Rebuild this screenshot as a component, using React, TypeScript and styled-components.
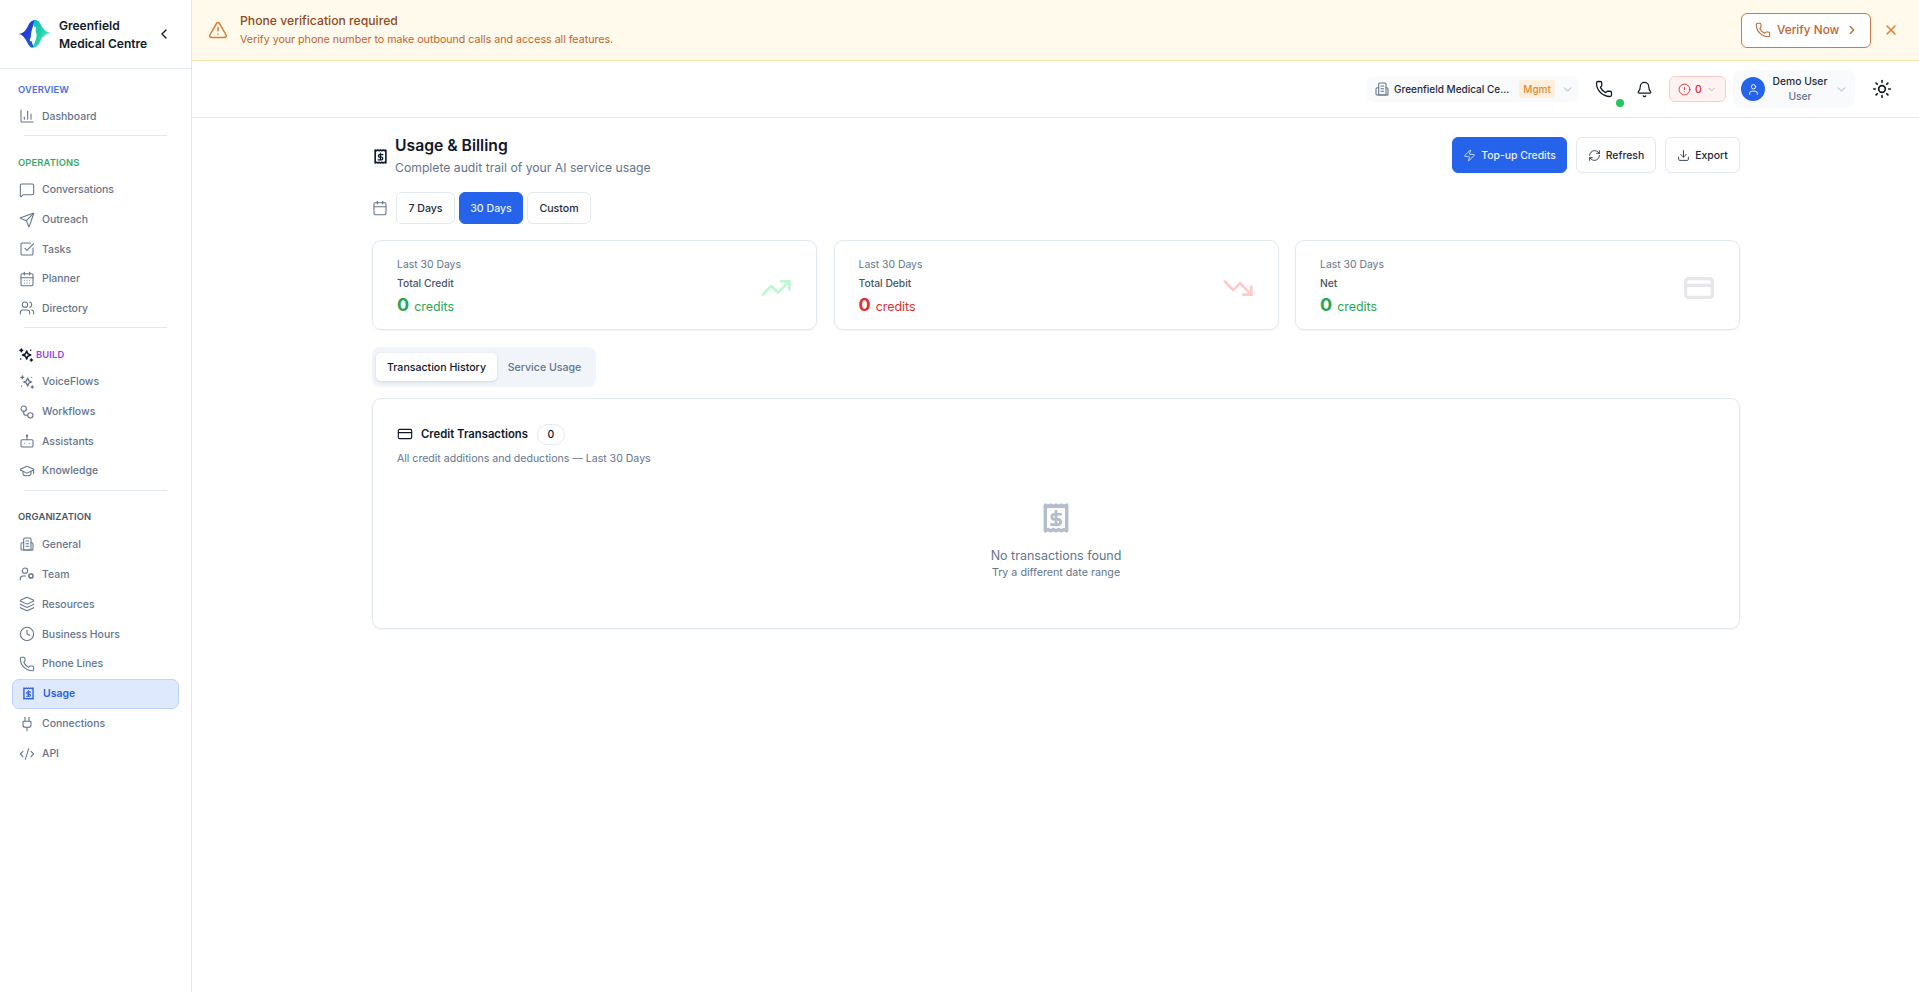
import React from 'react';
import styled, { createGlobalStyle } from 'styled-components';
import {
  Bell,
  CalendarDays,
  Calendar,
  ChartColumn,
  ChevronDown,
  ChevronLeft,
  ChevronRight,
  CircleAlert,
  Clock,
  CodeXml,
  CreditCard,
  Download,
  GraduationCap,
  Layers,
  MessageSquare,
  Phone,
  Plug,
  RefreshCw,
  Send,
  SquareCheckBig,
  Sun,
  TrendingDown,
  TrendingUp,
  TriangleAlert,
  User,
  UserCog,
  Users,
  X,
  Zap,
} from 'lucide-react';

const GlobalStyle = createGlobalStyle`
  html, body {
    margin: 0;
    padding: 0;
    background: #fff;
  }
  body {
    font-family: Inter, "Noto Sans", "Liberation Sans", sans-serif;
    color: #0f172a;
  }
  * {
    box-sizing: border-box;
  }
`;

const Shell = styled.div`
  display: flex;
  min-height: 992px;
`;

const Sidebar = styled.aside`
  width: 192px;
  flex: none;
  border-right: 1px solid #e2e8f0;
`;

const Brand = styled.div`
  height: 69px;
  border-bottom: 1px solid #e2e8f0;
  display: flex;
  align-items: center;
  padding: 0 0 0 19px;
`;

const BrandName = styled.div`
  margin-left: 8px;
  padding-top: 2px;
  width: 94px;
  font-size: 12px;
  line-height: 18px;
  font-weight: 600;
  color: #111827;
`;

const Collapse = styled.span`
  display: flex;
  margin-left: 3px;
  color: #111827;
`;

const Section = styled.section`
  padding-top: 11px;
  &:nth-of-type(1) {
    padding-top: 12px;
  }
`;

const SectionLabel = styled.div<{ $tone: string }>`
  display: flex;
  align-items: center;
  gap: 2px;
  height: 16px;
  padding-left: 18px;
  margin-bottom: 4.6px;
  font-size: 9.4px;
  font-weight: 600;
  letter-spacing: 0.12px;
  color: ${p => p.$tone};
`;

const Divider = styled.div`
  height: 1px;
  background: #e2e8f0;
  margin: 4px 24px 7.4px 24px;
`;

const NavItem = styled.a<{ $active?: boolean; $height: number }>`
  display: flex;
  align-items: center;
  gap: ${p => (p.$active ? '9px' : '7px')};
  height: ${p => p.$height}px;
  margin: 0 12px;
  padding-left: ${p => (p.$active ? '10px' : '6px')};
  border: 1px solid ${p => (p.$active ? '#bfd3fb' : 'transparent')};
  border-radius: 7px;
  background: ${p => (p.$active ? '#dfe9fd' : 'transparent')};
  font-size: 10.45px;
  font-weight: ${p => (p.$active ? 600 : 500)};
  color: ${p => (p.$active ? '#2f5fe0' : '#64748b')};
  svg {
    flex: none;
  }
`;

const Main = styled.div`
  flex: 1;
  min-width: 0;
`;

const Banner = styled.div`
  height: 61px;
  background: #fffaeb;
  border-bottom: 1px solid #fde3ae;
  display: flex;
  align-items: center;
  padding: 0 20px 0 16px;
`;

const BannerIcon = styled.span`
  display: flex;
  color: #d97c30;
  margin-right: 12px;
`;

const BannerText = styled.div`
  flex: 1;
`;

const BannerTitle = styled.div`
  font-size: 12.2px;
  font-weight: 500;
  line-height: 18px;
  color: #8f4a22;
`;

const BannerBody = styled.div`
  font-size: 10.65px;
  line-height: 19px;
  color: #c0622b;
`;

const VerifyButton = styled.button`
  display: flex;
  align-items: center;
  height: 35px;
  width: 130px;
  padding: 0 0 0 13px;
  gap: 6px;
  background: #fff;
  border: 1px solid #cf7a45;
  border-radius: 6px;
  font: 500 11.8px Inter, sans-serif;
  color: #bf632f;
`;

const BannerClose = styled.span`
  display: flex;
  margin-left: 12px;
  color: #dd7a2c;
`;

const Topbar = styled.header`
  height: 57px;
  border-bottom: 1px solid #e2e8f0;
  display: flex;
  align-items: center;
  justify-content: flex-end;
  padding-right: 10px;
`;

const OrgPill = styled.div`
  display: flex;
  align-items: center;
  width: 213px;
  height: 26px;
  padding: 0 8px;
  gap: 6px;
  background: #f8fafc;
  border-radius: 8px;
  color: #64748b;
  margin-right: 16px;
  svg {
    flex: none;
  }
`;

const OrgName = styled.span`
  width: 119px;
  margin-left: -2px;
  margin-right: 4px;
  white-space: nowrap;
  font-size: 10px;
  font-weight: 500;
  color: #1e293b;
`;

const OrgBadge = styled.span`
  padding: 2px 4px;
  border-radius: 3px;
  background: #fdefdc;
  color: #e08a34;
  font-size: 10px;
  font-weight: 500;
  line-height: 14px;
`;

const OrgChevron = styled.span`
  display: flex;
  margin-left: auto;
  color: #94a3b8;
`;

const IconSlot = styled.span<{ $gap?: number }>`
  position: relative;
  display: flex;
  color: #111827;
  margin-right: ${p => p.$gap ?? 17}px;
`;

const StatusDot = styled.span`
  position: absolute;
  right: -11px;
  bottom: -9px;
  width: 8px;
  height: 8px;
  border-radius: 50%;
  background: #22c55e;
`;

const AlertPill = styled.div`
  display: flex;
  align-items: center;
  justify-content: center;
  gap: 4px;
  width: 57px;
  height: 26px;
  background: #fef2f2;
  border: 1px solid #fecaca;
  border-radius: 6px;
  color: #dc2626;
  font-size: 10.5px;
  font-weight: 500;
  margin-right: 7px;
  svg:last-child {
    color: #94a3b8;
  }
`;

const UserPill = styled.div`
  display: flex;
  align-items: center;
  width: 122px;
  height: 38px;
  padding: 0 7px 0 8px;
  background: #f8fafc;
  border-radius: 8px;
  margin-right: 17px;
`;

const Avatar = styled.span`
  display: flex;
  align-items: center;
  justify-content: center;
  flex: none;
  width: 24px;
  height: 24px;
  border-radius: 50%;
  background: #2563eb;
  color: #fff;
`;

const UserInfo = styled.div`
  flex: 1;
  text-align: center;
  font-size: 10.3px;
  font-weight: 500;
  line-height: 15px;
  color: #1e293b;
`;

const UserRole = styled.div`
  color: #64748b;
`;

const Content = styled.div`
  margin: 0 179px 0 180px;
  padding-top: 19px;
`;

const PageHead = styled.div`
  display: flex;
  align-items: flex-start;
  justify-content: space-between;
  height: 36px;
  margin-bottom: 19px;
`;

const TitleGroup = styled.div`
  display: flex;
  align-items: center;
  gap: 8px;
  padding-left: 2px;
  margin-top: -1px;
`;

const PageTitle = styled.h1`
  margin: 0;
  font-size: 15.7px;
  line-height: 20px;
  font-weight: 600;
  color: #0f172a;
`;

const PageSub = styled.p`
  margin: 2.5px 0 0;
  font-size: 12.2px;
  line-height: 18px;
  color: #64748b;
`;

const Actions = styled.div`
  display: flex;
  gap: 9px;
`;

const ActionButton = styled.button<{ $primary?: boolean; $width: number }>`
  display: flex;
  align-items: center;
  justify-content: center;
  gap: 5px;
  height: 36px;
  width: ${p => p.$width}px;
  padding: 0;
  border: 1px solid ${p => (p.$primary ? '#2563eb' : '#e2e8f0')};
  border-radius: 6px;
  background: ${p => (p.$primary ? '#2563eb' : '#fff')};
  color: ${p => (p.$primary ? '#e8effe' : '#1e293b')};
  font: 500 10.4px Inter, sans-serif;
`;

const RangeRow = styled.div`
  display: flex;
  align-items: center;
  gap: 4px;
  margin-bottom: 16px;
`;

const RangeIcon = styled.span`
  display: flex;
  color: #64748b;
  margin-right: 4px;
`;

const RangeButton = styled.button<{ $active?: boolean }>`
  height: 32px;
  width: ${p => (p.$active ? '64px' : '59px')};
  padding: 0;
  border: 1px solid ${p => (p.$active ? '#2563eb' : '#e2e8f0')};
  border-radius: 6px;
  background: ${p => (p.$active ? '#2563eb' : '#fff')};
  color: ${p => (p.$active ? '#e8effe' : '#1e293b')};
  font: 500 10.6px Inter, sans-serif;
  &:last-child {
    width: 64px;
  }
`;

const StatGrid = styled.div`
  display: grid;
  grid-template-columns: repeat(3, 1fr);
  gap: 16.5px;
  margin-bottom: 17px;
`;

const StatCard = styled.div`
  display: flex;
  align-items: center;
  justify-content: space-between;
  height: 90px;
  padding: 5px 24px 0;
  border: 1px solid #e2e8f0;
  border-radius: 9px;
  box-shadow: 0 1px 2px rgba(15, 23, 42, 0.05);
`;

const StatPeriod = styled.div`
  font-size: 10.4px;
  line-height: 18px;
  color: #64748b;
`;

const StatName = styled.div`
  font-size: 10.3px;
  line-height: 18px;
  font-weight: 500;
  color: #475569;
`;

const StatValue = styled.div<{ $tone: string }>`
  display: flex;
  align-items: baseline;
  gap: 5px;
  margin-top: 1px;
  line-height: 24px;
  font-size: 12.4px;
  color: ${p => p.$tone};
  opacity: 0.95;
  strong {
    font-size: 18px;
    font-weight: 700;
  }
`;

const StatIcon = styled.span<{ $tone: string }>`
  display: flex;
  color: ${p => p.$tone};
`;

const TabList = styled.div`
  display: inline-flex;
  align-items: center;
  width: 224px;
  height: 40px;
  padding: 0 4px;
  border-radius: 8px;
  background: #f1f5f9;
  vertical-align: top;
`;

const Tab = styled.div<{ $active?: boolean }>`
  display: flex;
  align-items: center;
  justify-content: center;
  height: 28px;
  width: ${p => (p.$active ? '121px' : '95px')};
  border-radius: 5px;
  background: ${p => (p.$active ? '#fff' : 'transparent')};
  box-shadow: ${p => (p.$active ? '0 1px 3px rgba(15,23,42,.14)' : 'none')};
  font-size: 10.6px;
  font-weight: 500;
  color: ${p => (p.$active ? '#0f172a' : '#64748b')};
`;

const TabsWrap = styled.div`
  height: 40px;
  margin-bottom: 11px;
`;

const Panel = styled.div`
  height: 231px;
  padding: 24px 24px 0;
  border: 1px solid #e2e8f0;
  border-radius: 9px;
  box-shadow: 0 1px 2px rgba(15, 23, 42, 0.05);
`;

const PanelHead = styled.div`
  display: flex;
  align-items: center;
  gap: 8px;
  height: 22px;
`;

const PanelTitle = styled.span`
  font-size: 11.3px;
  font-weight: 600;
  color: #0f172a;
`;

const CountBadge = styled.span`
  display: flex;
  align-items: center;
  justify-content: center;
  width: 28px;
  height: 21px;
  margin-left: 1px;
  border: 1px solid #e2e8f0;
  border-radius: 11px;
  font-size: 10.5px;
  font-weight: 500;
`;

const PanelSub = styled.p`
  margin: 6px 0 0;
  font-size: 10.55px;
  line-height: 16px;
  color: #64748b;
`;

const Empty = styled.div`
  display: flex;
  flex-direction: column;
  align-items: center;
  padding-top: 36px;
  color: #b4bdcb;
`;

const EmptyTitle = styled.div`
  margin-top: 14px;
  font-size: 12.5px;
  line-height: 18px;
  color: #64748b;
`;

const EmptyHint = styled.div`
  font-size: 10.7px;
  line-height: 15px;
  color: #64748b;
`;

const Logo = () => (
  <svg width="32" height="30" viewBox="0 0 32 30" fill="none">
    <defs>
      <linearGradient id="logoTeal" x1="0" y1="0" x2="1" y2="0.6">
        <stop offset="0" stopColor="#12b8c4" />
        <stop offset="0.5" stopColor="#1fd0a8" />
        <stop offset="1" stopColor="#7ae8d4" />
      </linearGradient>
      <linearGradient id="logoBlue" x1="0" y1="0" x2="1" y2="1">
        <stop offset="0" stopColor="#2a1fd0" />
        <stop offset="1" stopColor="#1668d8" />
      </linearGradient>
    </defs>
    <path d="M14 2C17-1 20 2 22 6 24 10 27 13 32 14 27 15 24 17 22 21 20 26 17 29 14 28 16 22 19 18 17 13 16 9 14 6 14 2Z" fill="url(#logoTeal)" />
    <path d="M0 15C5 14 7 11 9 7 10 4 12 2 15 1 15 6 12 12 12 16 12 20 13 25 15 28 12 30 10 27 8 23 6 19 4 16 0 15Z" fill="url(#logoBlue)" />
    <path d="M16 9 12 21" stroke="#fff" strokeWidth="2.4" strokeLinecap="round" />
  </svg>
);

const ReceiptIcon = ({ w, h, stroke = 3 }: { w: number; h: number; stroke?: number }) => (
  <svg width={w} height={h} viewBox="0 0 24 28" fill="none" stroke="currentColor" strokeWidth={stroke} strokeLinejoin="round" strokeLinecap="round">
    <path d="M2 2l2.5 1.2L7 2l2.5 1.2L12 2l2.5 1.2L17 2l2.5 1.2L22 2v24l-2.5-1.2L17 26l-2.5-1.2L12 26l-2.5-1.2L7 26l-2.5-1.2L2 26Z" />
    <path d="M12 7.5v13M16.5 10.5h-6a2.4 2.4 0 0 0 0 4.8h3.4a2.4 2.4 0 0 1 0 4.8H7.5" strokeWidth={stroke * 0.8} />
  </svg>
);

const SparkIcon = ({ dark }: { dark?: boolean }) => (
  <svg width="16" height="16" viewBox="0 0 24 24" fill="none" stroke={dark ? '#111827' : 'currentColor'} strokeWidth={dark ? 2.4 : 2} strokeLinecap="round" strokeLinejoin="round">
    <path d="M13 6l1.8 4.2L19 12l-4.2 1.8L13 18l-1.8-4.2L7 12l4.2-1.8Z" />
    <path d="M5 3v4M3 5h4M20 18v3M18.5 19.5h3M4 18h.01M19 5h.01" />
  </svg>
);

const WorkflowIcon = () => (
  <svg width="16" height="16" viewBox="0 0 24 24" fill="none" stroke="currentColor" strokeWidth="1.6" strokeLinecap="round">
    <circle cx="7" cy="7" r="4" />
    <circle cx="17" cy="17" r="4" />
    <path d="M7 11v2a4 4 0 0 0 4 4h2" />
  </svg>
);

const AssistantIcon = () => (
  <svg width="16" height="16" viewBox="0 0 24 24" fill="none" stroke="currentColor" strokeWidth="1.6" strokeLinecap="round" strokeLinejoin="round">
    <rect x="3" y="10" width="18" height="11" rx="2" />
    <path d="M12 10V5M8.5 15.5h.01M15.5 15.5h.01" />
    <circle cx="12" cy="4" r="1" />
  </svg>
);

const BuildingIcon = ({ size = 16 }: { size?: number }) => (
  <svg width={size} height={size} viewBox="0 0 24 24" fill="none" stroke="currentColor" strokeWidth="1.6" strokeLinejoin="round" strokeLinecap="round">
    <path d="M7 21V5a2 2 0 0 1 2-2h7a2 2 0 0 1 2 2v16Z" />
    <path d="M7 10H5a2 2 0 0 0-2 2v7a2 2 0 0 0 2 2h16M18 10h1a2 2 0 0 1 2 2v7a2 2 0 0 1-2 2" />
    <path d="M10.5 7.5h4M10.5 11.5h4M10.5 15.5h4" />
  </svg>
);

const icon = { size: 16, strokeWidth: 1.6 };

interface NavEntry {
  label: string;
  node: React.ReactNode;
  active?: boolean;
}

const sections: { label: string; tone: string; spark?: boolean; rowHeight: number; items: NavEntry[] }[] = [
  {
    label: 'OVERVIEW',
    tone: '#4a6ee8',
    rowHeight: 29.6,
    items: [{ label: 'Dashboard', node: <ChartColumn {...icon} /> }],
  },
  {
    label: 'OPERATIONS',
    tone: '#3da765',
    rowHeight: 29.6,
    items: [
      { label: 'Conversations', node: <MessageSquare {...icon} /> },
      { label: 'Outreach', node: <Send {...icon} /> },
      { label: 'Tasks', node: <SquareCheckBig {...icon} /> },
      { label: 'Planner', node: <CalendarDays {...icon} /> },
      { label: 'Directory', node: <Users {...icon} /> },
    ],
  },
  {
    label: 'BUILD',
    tone: '#9a3fe8',
    spark: true,
    rowHeight: 29.6,
    items: [
      { label: 'VoiceFlows', node: <SparkIcon /> },
      { label: 'Workflows', node: <WorkflowIcon /> },
      { label: 'Assistants', node: <AssistantIcon /> },
      { label: 'Knowledge', node: <GraduationCap {...icon} /> },
    ],
  },
  {
    label: 'ORGANIZATION',
    tone: '#4b5563',
    rowHeight: 29.9,
    items: [
      { label: 'General', node: <BuildingIcon /> },
      { label: 'Team', node: <UserCog {...icon} /> },
      { label: 'Resources', node: <Layers {...icon} /> },
      { label: 'Business Hours', node: <Clock {...icon} /> },
      { label: 'Phone Lines', node: <Phone {...icon} /> },
      { label: 'Usage', node: <ReceiptIcon w={11} h={13} stroke={3} />, active: true },
      { label: 'Connections', node: <Plug {...icon} /> },
      { label: 'API', node: <CodeXml {...icon} /> },
    ],
  },
];

const stats = [
  { name: 'Total Credit', tone: '#16a34a', iconTone: '#bbf7d0', node: <TrendingUp size={32} strokeWidth={2} /> },
  { name: 'Total Debit', tone: '#dc2626', iconTone: '#fecaca', node: <TrendingDown size={32} strokeWidth={2} /> },
  { name: 'Net', tone: '#16a34a', iconTone: '#e5e7eb', node: <CreditCard size={32} strokeWidth={2.5} /> },
];

export default function App() {
  return (
    <>
      <GlobalStyle />
      <Shell>
        <Sidebar>
          <Brand>
            <Logo />
            <BrandName>Greenfield Medical Centre</BrandName>
            <Collapse>
              <ChevronLeft size={16} strokeWidth={2} />
            </Collapse>
          </Brand>
          {sections.map((s, i) => (
            <Section key={s.label}>
              <SectionLabel $tone={s.tone}>
                {s.spark && <SparkIcon dark />}
                {s.label}
              </SectionLabel>
              {s.items.map(item => (
                <NavItem key={item.label} $active={item.active} $height={s.rowHeight}>
                  {item.node}
                  {item.label}
                </NavItem>
              ))}
              {i < sections.length - 1 && <Divider />}
            </Section>
          ))}
        </Sidebar>
        <Main>
          <Banner>
            <BannerIcon>
              <TriangleAlert size={20} strokeWidth={1.8} />
            </BannerIcon>
            <BannerText>
              <BannerTitle>Phone verification required</BannerTitle>
              <BannerBody>Verify your phone number to make outbound calls and access all features.</BannerBody>
            </BannerText>
            <VerifyButton>
              <Phone size={16} strokeWidth={1.6} />
              Verify Now
              <ChevronRight size={14} strokeWidth={2} />
            </VerifyButton>
            <BannerClose>
              <X size={16} strokeWidth={2} />
            </BannerClose>
          </Banner>
          <Topbar>
            <OrgPill>
              <BuildingIcon />
              <OrgName>Greenfield Medical Ce...</OrgName>
              <OrgBadge>Mgmt</OrgBadge>
              <OrgChevron>
                <ChevronDown size={13} strokeWidth={1.6} />
              </OrgChevron>
            </OrgPill>
            <IconSlot $gap={23}>
              <Phone size={18} strokeWidth={1.7} />
              <StatusDot />
            </IconSlot>
            <IconSlot $gap={16}>
              <Bell size={17} strokeWidth={1.7} />
            </IconSlot>
            <AlertPill>
              <CircleAlert size={13} strokeWidth={1.6} />
              0
              <ChevronDown size={11} strokeWidth={1.6} />
            </AlertPill>
            <UserPill>
              <Avatar>
                <User size={13} strokeWidth={1.7} />
              </Avatar>
              <UserInfo>
                Demo User
                <UserRole>User</UserRole>
              </UserInfo>
              <ChevronDown size={13} strokeWidth={1.6} color="#94a3b8" />
            </UserPill>
            <IconSlot>
              <Sun size={20} strokeWidth={2} />
            </IconSlot>
          </Topbar>
          <Content>
            <PageHead>
              <TitleGroup>
                <ReceiptIcon w={13} h={15} />
                <div>
                  <PageTitle>Usage &amp; Billing</PageTitle>
                  <PageSub>Complete audit trail of your AI service usage</PageSub>
                </div>
              </TitleGroup>
              <Actions>
                <ActionButton $primary $width={115}>
                  <Zap size={13} strokeWidth={1.6} />
                  Top-up Credits
                </ActionButton>
                <ActionButton $width={80}>
                  <RefreshCw size={13} strokeWidth={1.6} />
                  Refresh
                </ActionButton>
                <ActionButton $width={75}>
                  <Download size={13} strokeWidth={1.6} />
                  Export
                </ActionButton>
              </Actions>
            </PageHead>
            <RangeRow>
              <RangeIcon>
                <Calendar size={16} strokeWidth={1.6} />
              </RangeIcon>
              <RangeButton>7 Days</RangeButton>
              <RangeButton $active>30 Days</RangeButton>
              <RangeButton>Custom</RangeButton>
            </RangeRow>
            <StatGrid>
              {stats.map(s => (
                <StatCard key={s.name}>
                  <div>
                    <StatPeriod>Last 30 Days</StatPeriod>
                    <StatName>{s.name}</StatName>
                    <StatValue $tone={s.tone}>
                      <strong>0</strong> credits
                    </StatValue>
                  </div>
                  <StatIcon $tone={s.iconTone}>{s.node}</StatIcon>
                </StatCard>
              ))}
            </StatGrid>
            <TabsWrap>
              <TabList>
                <Tab $active>Transaction History</Tab>
                <Tab>Service Usage</Tab>
              </TabList>
            </TabsWrap>
            <Panel>
              <PanelHead>
                <CreditCard size={16} strokeWidth={1.7} />
                <PanelTitle>Credit Transactions</PanelTitle>
                <CountBadge>0</CountBadge>
              </PanelHead>
              <PanelSub>All credit additions and deductions — Last 30 Days</PanelSub>
              <Empty>
                <ReceiptIcon w={26} h={30} stroke={3.2} />
                <EmptyTitle>No transactions found</EmptyTitle>
                <EmptyHint>Try a different date range</EmptyHint>
              </Empty>
            </Panel>
          </Content>
        </Main>
      </Shell>
    </>
  );
}
